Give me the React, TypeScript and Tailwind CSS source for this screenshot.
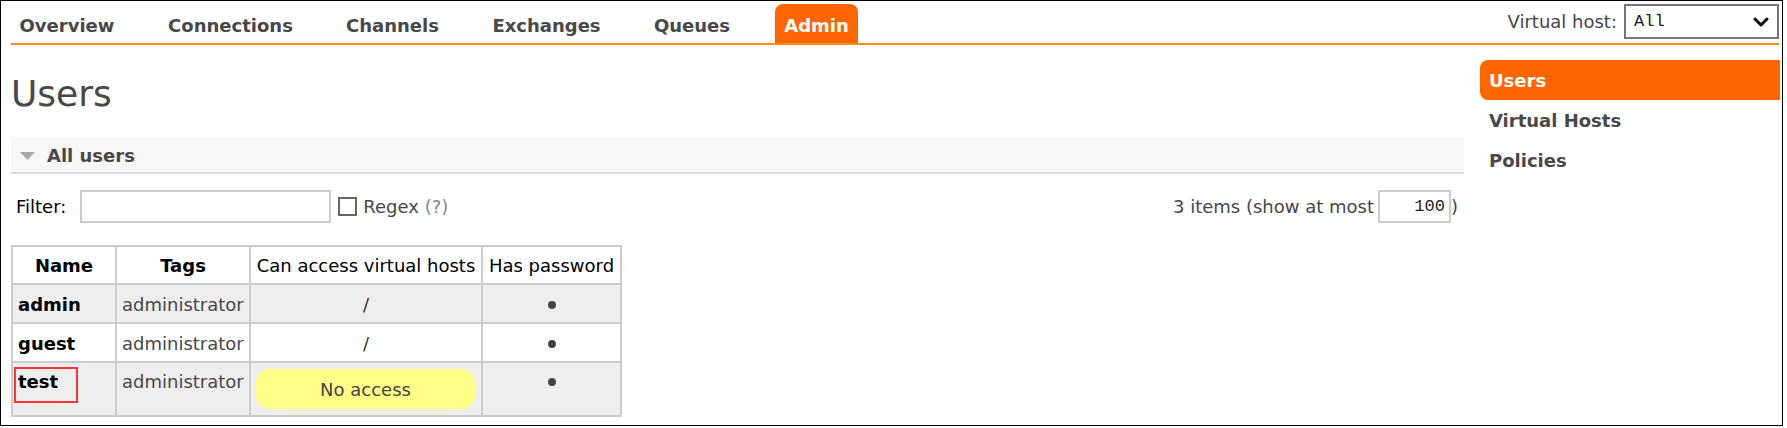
import React from "react";

const tabs: { label: string; w: string; active?: boolean }[] = [
  { label: "Overview", w: "w-[112px]" },
  { label: "Connections", w: "w-[141px]" },
  { label: "Channels", w: "w-[109px]" },
  { label: "Exchanges", w: "w-[125px]" },
  { label: "Queues", w: "w-[92px]" },
  { label: "Admin", w: "w-[83px]", active: true },
];

function Header() {
  return (
    <div className="ml-[10px] mr-[3px] h-[44px] border-b-2 border-[#ff8c1a] flex justify-between">
      <ul className="flex items-end gap-[37px]">
        {tabs.map((t) => (
          <li
            key={t.label}
            className={
              t.active
                ? `${t.w} h-[39px] pt-[11px] text-center rounded-t-[8px] bg-[#ff6600] text-white font-bold text-[18px] leading-[21px] whitespace-nowrap`
                : `${t.w} h-[39px] pt-[11px] text-center text-[#484848] font-bold text-[18px] leading-[21px] whitespace-nowrap`
            }
          >
            {t.label}
          </li>
        ))}
      </ul>
      <div className="flex items-start">
        <span className="mt-[10px] text-[18px] leading-[21px] text-[#484848] whitespace-nowrap">Virtual host:</span>
        <div className="ml-[7px] mt-[3px] w-[155px] h-[35px] border-2 border-[#767676] bg-white flex items-center justify-between pl-[8px] pr-[8px]">
          <span className="font-['Liberation_Mono',monospace] text-[17px] text-[#222]">All</span>
          <svg width="16" height="10" viewBox="0 0 16 10">
            <path d="M2 2 L8 8 L14 2" fill="none" stroke="#111" strokeWidth="3" strokeLinecap="round" strokeLinejoin="round" />
          </svg>
        </div>
      </div>
    </div>
  );
}

function Sidebar() {
  const items = [
    { label: "Users", active: true },
    { label: "Virtual Hosts" },
    { label: "Policies" },
  ];
  return (
    <div className="mt-[15px] ml-[16px] w-[300px] flex flex-col">
      {items.map((i) => (
        <div
          key={i.label}
          className={
            i.active
              ? "h-[40px] pt-[10px] pl-[9px] rounded-l-[8px] bg-[#ff6600] text-white font-bold text-[18px] leading-[21px]"
              : "h-[40px] pt-[10px] pl-[9px] text-[#484848] font-bold text-[18px] leading-[21px]"
          }
        >
          {i.label}
        </div>
      ))}
    </div>
  );
}

function Dot() {
  return (
    <div className="h-[21px] flex items-center justify-center">
      <span className="inline-block w-[8px] h-[8px] rounded-full bg-[#444444]" />
    </div>
  );
}

function UsersTable() {
  const cellBase = "text-[18px] leading-[21px] whitespace-nowrap";
  return (
    <div className="mt-[22px] w-fit grid grid-cols-[102px_132px_230px_137px] grid-rows-[36px_37px_37px_52px] gap-[2px] p-[2px] bg-[#cccccc]">
      <div className={`${cellBase} bg-white pt-[8px] text-center font-bold text-black`}>Name</div>
      <div className={`${cellBase} bg-white pt-[8px] text-center font-bold text-black`}>Tags</div>
      <div className={`${cellBase} bg-white pt-[8px] text-center text-black`}>Can access virtual hosts</div>
      <div className={`${cellBase} bg-white pt-[8px] text-center text-black`}>Has password</div>

      <div className={`${cellBase} bg-[#eeeeee] pt-[9px] pl-[5px] font-bold text-black`}>admin</div>
      <div className={`${cellBase} bg-[#eeeeee] pt-[9px] pl-[5px] text-[#484848]`}>administrator</div>
      <div className={`${cellBase} bg-[#eeeeee] pt-[9px] text-center text-[#333]`}>/</div>
      <div className="bg-[#eeeeee] pt-[9px]"><Dot /></div>

      <div className={`${cellBase} bg-white pt-[9px] pl-[5px] font-bold text-black`}>guest</div>
      <div className={`${cellBase} bg-white pt-[9px] pl-[5px] text-[#484848]`}>administrator</div>
      <div className={`${cellBase} bg-white pt-[9px] text-center text-[#333]`}>/</div>
      <div className="bg-white pt-[9px]"><Dot /></div>

      <div className={`${cellBase} relative bg-[#eeeeee] pt-[8px] pl-[5px] font-bold text-black`}>
        test
        <div className="absolute left-[1px] top-[4px] w-[64px] h-[36px] border-2 border-[#ff3333]" />
      </div>
      <div className={`${cellBase} bg-[#eeeeee] pt-[8px] pl-[5px] text-[#484848]`}>administrator</div>
      <div className="bg-[#eeeeee] pt-[6px] pl-[5px] pr-[6px]">
        <div className="h-[40px] rounded-[14px] bg-[#ffff88] flex items-center justify-center text-[18px] leading-[21px] text-[#444]">
          No access
        </div>
      </div>
      <div className="bg-[#eeeeee] pt-[8px]"><Dot /></div>
    </div>
  );
}

function MainColumn() {
  return (
    <div className="ml-[10px] w-[1453px] flex flex-col">
      <h1 className="mt-[28px] text-[36px] leading-[42px] font-normal text-[#484848]">Users</h1>
      <div className="mt-[22px] h-[37px] bg-[#f7f7f7] border-b-2 border-[#dddddd] flex items-start pt-[8px]">
        <svg className="ml-[9px] mt-[7px]" width="15" height="8" viewBox="0 0 15 8">
          <polygon points="0,0 15,0 7.5,8" fill="#aaaaaa" />
        </svg>
        <span className="ml-[12px] text-[18px] leading-[21px] font-bold text-[#484848]">All users</span>
      </div>
      <div className="mt-[16px] h-[33px] flex items-center justify-between">
        <div className="flex items-center">
          <span className="pl-[5px] text-[18px] leading-[21px] text-black">Filter:</span>
          <div className="ml-[14px] w-[251px] h-[33px] border-2 border-[#cccccc] bg-white" />
          <div className="ml-[7px] w-[19px] h-[19px] border-2 border-[#666666] bg-white" />
          <span className="ml-[6px] text-[18px] leading-[21px] text-[#484848]">
            Regex <span className="text-[#888888]">(?)</span>
          </span>
        </div>
        <div className="flex items-center pr-[6px]">
          <span className="text-[18px] leading-[21px] text-[#484848] whitespace-nowrap">3 items (show at most</span>
          <div className="ml-[4px] w-[73px] h-[33px] border-2 border-[#cccccc] bg-white flex items-center justify-end pr-[4px]">
            <span className="font-['Liberation_Mono',monospace] text-[17px] text-[#222]">100</span>
          </div>
          <span className="text-[18px] leading-[21px] text-[#484848]">)</span>
        </div>
      </div>
      <UsersTable />
    </div>
  );
}

export default function App() {
  return (
    <div className="w-[1787px] h-[428px] bg-white font-['DejaVu_Sans',sans-serif]">
      <div className="w-[1783px] h-[426px] border border-black flex flex-col overflow-hidden">
        <Header />
        <div className="flex items-start">
          <MainColumn />
          <Sidebar />
        </div>
      </div>
    </div>
  );
}
